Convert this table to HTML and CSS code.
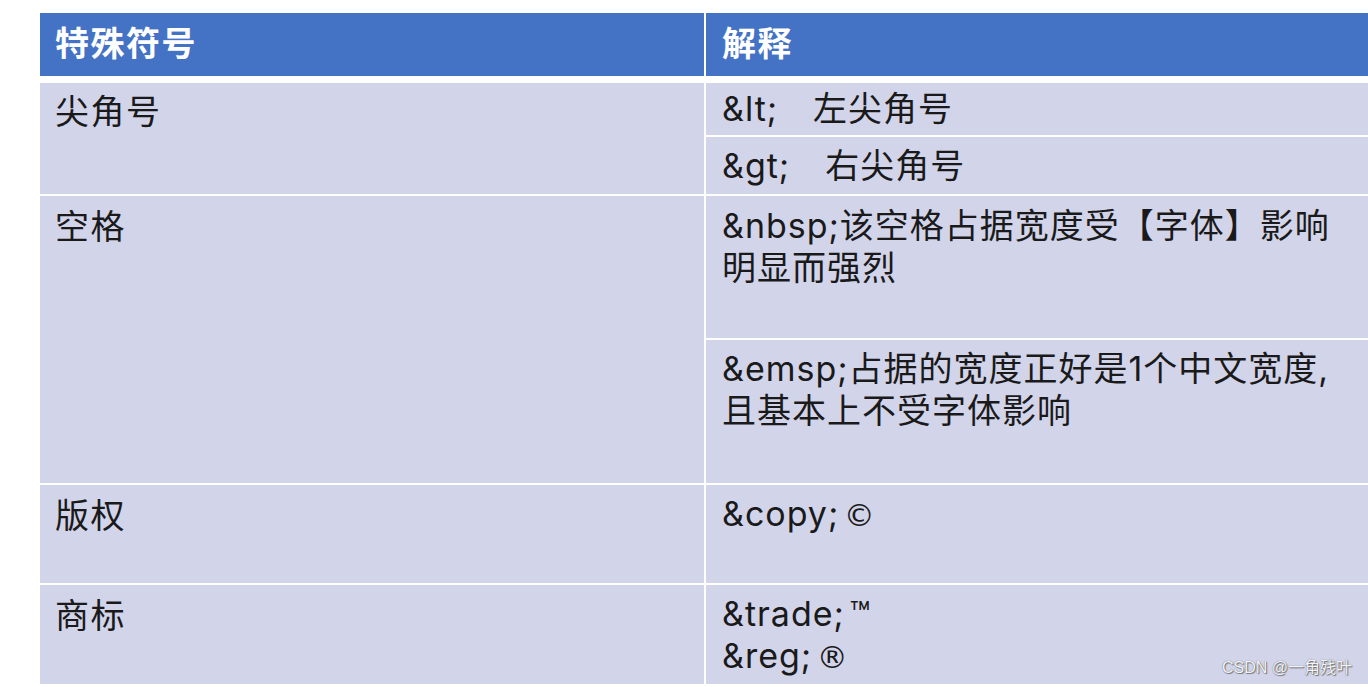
FILE: index.html
```html
<!DOCTYPE html>
<html lang="zh-CN">
<head>
<meta charset="utf-8">
<title>特殊符号</title>
<link rel="stylesheet" href="styles.css">
</head>
<body>
<div class="page">
  <div class="table">
    <div class="thead">
      <div class="th">特殊符号</div>
      <div class="th">解释</div>
    </div>
    <div class="tbody">
      <div class="cell name span-ab">尖角号</div>
      <div class="cell desc row-a">&amp;lt;　左尖角号</div>
      <div class="cell desc row-b">&amp;gt;　右尖角号</div>
      <div class="cell name span-cd">空格</div>
      <div class="cell desc row-c">&amp;nbsp;该空格占据宽度受【字体】影响<br>明显而强烈</div>
      <div class="cell desc row-d">&amp;emsp;占据的宽度正好是1个中文宽度,<br>且基本上不受字体影响</div>
      <div class="cell name row-e">版权</div>
      <div class="cell desc row-e">&amp;copy; <span class="sym">©</span></div>
      <div class="cell name row-f">商标</div>
      <div class="cell desc row-f">&amp;trade; ™<br>&amp;reg; <span class="sym">®</span></div>
    </div>
  </div>
  <div class="watermark">CSDN @一角残叶</div>
</div>
</body>
</html>
```

FILE: styles.css
```css
html, body {
  margin: 0;
  padding: 0;
  background: #ffffff;
}

body {
  font-family: "Inter", "Noto Sans CJK SC", sans-serif;
  color: #1a1a1a;
}

.page {
  position: relative;
  width: 1368px;
  height: 687px;
  overflow: hidden;
}

.table {
  margin: 13px 0 0 40px;
  width: 1328px;
  display: flex;
  flex-direction: column;
  gap: 7px;
}

.thead {
  display: grid;
  grid-template-columns: 664px 662px;
  column-gap: 2px;
  height: 63px;
}

.th {
  background: #4472c4;
  color: #ffffff;
  font-weight: 700;
  font-size: 34px;
  letter-spacing: 1.5px;
  line-height: 42px;
  padding: 8px 0 0 15px;
  font-family: "Noto Sans CJK SC", sans-serif;
}

.th + .th {
  padding-left: 16px;
}

.tbody {
  display: grid;
  grid-template-columns: 664px 662px;
  grid-template-rows: 52px 57px 142px 143px 98px 99px;
  gap: 2px;
}

.cell {
  background: #d2d4ea;
  font-size: 34px;
  letter-spacing: 1px;
  line-height: 42px;
  padding-top: 7px;
  white-space: nowrap;
}

.name {
  grid-column: 1;
  padding-left: 15px;
  font-family: "Noto Sans CJK SC", sans-serif;
  letter-spacing: 1.5px;
}

.desc {
  grid-column: 2;
  padding-left: 16px;
  word-spacing: -6px;
}

.sym {
  font-family: "DejaVu Sans", sans-serif;
  font-weight: 400;
  font-size: 31px;
  letter-spacing: 0;
}

.span-ab { grid-row: 1 / span 2; padding-top: 6px; }
.span-cd { grid-row: 3 / span 2; padding-top: 8px; }
.row-a { grid-row: 1; padding-top: 5px; }
.row-b { grid-row: 2; padding-top: 8px; }
.row-c { grid-row: 3; padding-top: 9px; }
.row-d { grid-row: 4; padding-top: 8px; }
.row-e { grid-row: 5; padding-top: 8px; }
.row-f { grid-row: 6; padding-top: 8px; }

.watermark {
  position: absolute;
  right: 16px;
  bottom: 9px;
  font-family: "Liberation Sans", "Noto Sans CJK SC", sans-serif;
  font-size: 16px;
  color: #f4f4f8;
  text-shadow: 0 0 1px #555, 1px 1px 1px #777;
}
```
